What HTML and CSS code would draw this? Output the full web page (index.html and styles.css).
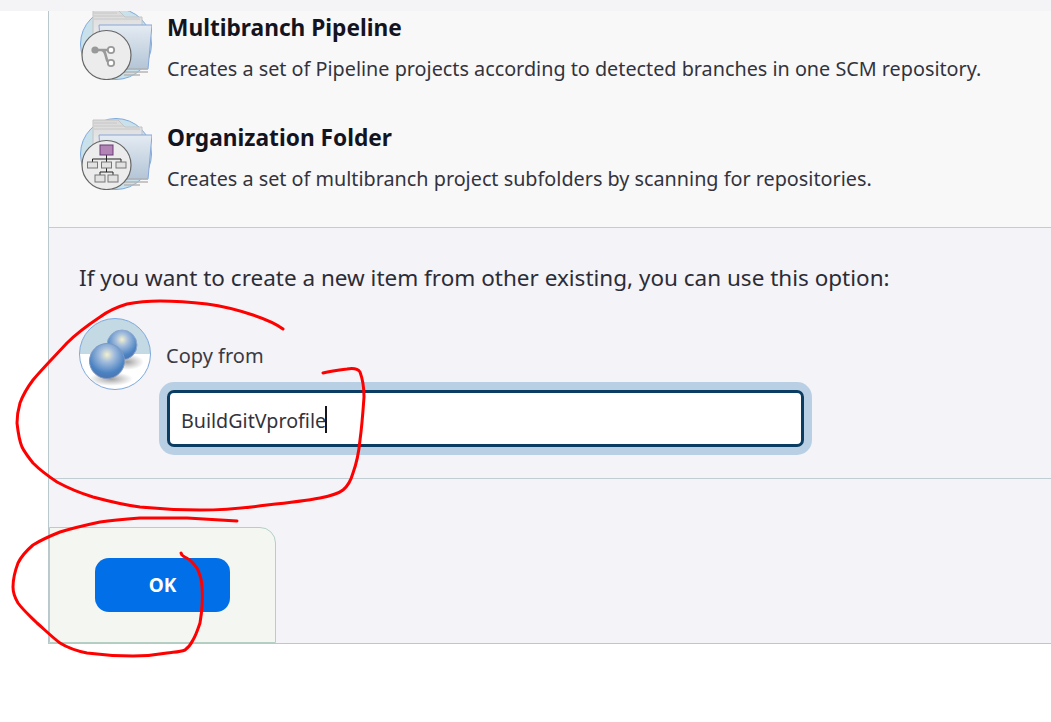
FILE: index.html
```html
<!DOCTYPE html>
<html lang="en">
<head>
<meta charset="utf-8">
<title>New item</title>
<link rel="stylesheet" href="styles.css">
</head>
<body>
<svg class="defs" width="0" height="0" aria-hidden="true">
  <defs>
    <linearGradient id="folderFill" x1="0" y1="0" x2="0" y2="1"><stop offset="0" stop-color="#e4ebf3"/><stop offset="1" stop-color="#b4c5d6"/></linearGradient>
    <linearGradient id="paperFill" x1="0" y1="0" x2="0" y2="1"><stop offset="0" stop-color="#d9d9d9"/><stop offset="1" stop-color="#f2f2f2"/></linearGradient>
    <radialGradient id="ball" cx="0.5" cy="0.32" r="0.7"><stop offset="0" stop-color="#f3f0cf"/><stop offset="0.3" stop-color="#a3bddd"/><stop offset="0.75" stop-color="#4a82c2"/><stop offset="1" stop-color="#4f72aa"/></radialGradient>
    <radialGradient id="shade"><stop offset="0" stop-color="#777" stop-opacity=".7"/><stop offset="1" stop-color="#8a8a8a" stop-opacity="0"/></radialGradient>
    <symbol id="folder" viewBox="0 0 72 72">
      <circle cx="36" cy="36" r="35.5" fill="#c9e1ea" stroke="#7ea9dc"/>
      <path d="M13 2H38L45 9H62V40H13Z" fill="url(#paperFill)" stroke="#c4c4c4"/>
      <path d="M14 5H37M14 8H44M14 11H60" stroke="#c8c8c8"/>
      <path d="M19 17H72L68 61H22Z" fill="url(#folderFill)" stroke="#86a7d8"/>
      <path d="M44 61H68M44 64H68M44 67H60" stroke="#b5b5b5" stroke-width="1.5"/>
      <circle cx="26.5" cy="47" r="24.5" fill="#ececec" stroke="#666" stroke-width="1.2"/>
    </symbol>
  </defs>
</svg>

<div class="topbar"></div>
<main class="panel">
  <section class="types">
    <article class="type">
      <svg class="icon" viewBox="0 0 72 72">
        <use href="#folder"/>
        <path d="M15 42H21C28 42 24 55 31 55M21 42H31" fill="none" stroke="#999" stroke-width="2.600"/>
        <circle cx="15" cy="42" r="3.600" fill="#999"/>
        <circle cx="31" cy="42" r="3.200" fill="#fff" stroke="#999" stroke-width="1.800"/>
        <circle cx="31" cy="55" r="3.200" fill="#fff" stroke="#999" stroke-width="1.800"/>
      </svg>
      <div class="type-text">
        <h2 class="type-title">Multibranch Pipeline</h2>
        <p class="type-desc">Creates a set of Pipeline projects according to detected branches in one SCM repository.</p>
      </div>
    </article>
    <article class="type">
      <svg class="icon" viewBox="0 0 72 72">
        <use href="#folder"/>
        <path d="M26.500 37V41M12.500 44V41H41V44M26.500 41V44M26.500 50V54M20 57V54H33V57" fill="none" stroke="#222"/>
        <rect x="20" y="27" width="13" height="10" fill="#b184b5" stroke="#6a3a78"/>
        <rect x="7.500" y="44" width="10" height="6" fill="#e2e2e2" stroke="#777"/>
        <rect x="21.500" y="44" width="10" height="6" fill="#e2e2e2" stroke="#777"/>
        <rect x="36" y="44" width="10" height="6" fill="#e2e2e2" stroke="#777"/>
        <rect x="15" y="57" width="10" height="7" fill="#e2e2e2" stroke="#777"/>
        <rect x="28" y="57" width="10" height="7" fill="#e2e2e2" stroke="#777"/>
      </svg>
      <div class="type-text">
        <h2 class="type-title">Organization Folder</h2>
        <p class="type-desc">Creates a set of multibranch project subfolders by scanning for repositories.</p>
      </div>
    </article>
  </section>

  <section class="copy">
    <p class="copy-lead">If you want to create a new item from other existing, you can use this option:</p>
    <div class="copy-row">
      <svg class="icon" viewBox="0 0 72 72">
        <defs><clipPath id="disc"><circle cx="36" cy="36" r="35.500"/></clipPath></defs>
        <g clip-path="url(#disc)">
          <rect width="72" height="72" fill="#fff"/>
          <rect width="72" height="36" fill="#c3d9e3"/>
        </g>
        <circle cx="36" cy="36" r="35.500" fill="none" stroke="#7ea9dc"/>
        <ellipse cx="48" cy="44" rx="17" ry="8" fill="url(#shade)"/>
        <ellipse cx="32" cy="61" rx="22" ry="7" fill="url(#shade)"/>
        <circle cx="43" cy="27" r="15" fill="url(#ball)" stroke="#8fa9cf"/>
        <circle cx="28" cy="43" r="17.500" fill="url(#ball)" stroke="#8098c2"/>
      </svg>
      <div class="copy-field">
        <label class="copy-label" for="copyFrom">Copy from</label>
        <div class="input-box" id="copyFrom"><span>BuildGitVprofile</span><i class="caret"></i></div>
      </div>
    </div>
  </section>

  <footer class="actions">
    <div class="button-bar">
      <button class="ok" type="button">OK</button>
    </div>
  </footer>
</main>

<svg class="ink" viewBox="0 0 1051 722" aria-hidden="true">
  <path d="M283 329C275 323 265 319 253 315C238 310 222 306 207 304C190 302 175 301 160 301C148 301 137 302 127 304C117 307 108 311 100 317C88 325 77 333 67 343C55 356 43 368 33 380C27 388 23 395 20 403C18 410 17 416 17 423C18 432 19 440 22 447C25 453 29 458 33 463C40 470 48 476 57 482C68 488 80 493 93 497C108 501 124 505 140 507C160 509 180 510 200 510C222 510 245 508 267 505C286 503 304 501 320 498C330 496 338 494 343 490C348 486 351 480 353 473C357 462 359 451 360 440C362 426 363 411 364 397C364 388 363 380 360 372C358 369 353 368 347 369C339 370 331 371 323 373" />
  <path d="M237 521C220 520 204 519 187 518C171 518 155 518 140 518C126 519 113 520 100 522C86 525 73 528 60 532C50 536 41 540 33 545C26 551 21 557 18 563C15 571 13 579 13 587C13 593 15 598 18 603C23 610 30 616 37 623C45 630 52 637 60 643C68 648 77 651 87 653C102 655 118 656 133 656C145 656 156 655 167 653C174 652 180 652 185 650C189 647 191 644 193 640C196 635 198 629 200 623C202 611 203 599 202 587C202 580 200 575 198 570C196 566 193 563 190 560C187 558 184 557 182 555L181 553" />
</svg>
</body>
</html>
```
FILE: styles.css
```css
* { box-sizing: border-box; }

html, body {
  margin: 0;
  height: 722px;
  overflow: hidden;
  background: #fff;
  color: #14141f;
  font-family: "Noto Sans", "Open Sans", sans-serif;
}

.defs { display: block; height: 0; }

.topbar {
  height: 11px;
  background: #f4f4f7;
}

.panel {
  margin-left: 48px;
  height: 633px;
  border-left: 1px solid #b9c8cd;
  border-bottom: 1px solid #b9c8cd;
  background: #f3f3f8;
  display: flex;
  flex-direction: column;
}

.types {
  height: 217px;
  overflow: hidden;
  background: #f8f8f9;
  border-bottom: 1px solid #c0cdd2;
  padding-left: 31px;
}

.type {
  height: 110px;
  display: flex;
  gap: 15px;
  margin-top: -3px;
  margin-bottom: 3px;
}

.icon {
  width: 72px;
  height: 72px;
  flex: none;
  display: block;
}

.type-text { padding-top: 6px; }

.type-title {
  margin: 0;
  font-size: 22.700px;
  line-height: 28px;
  font-weight: 700;
}

.type-desc {
  margin: 13px 0 0;
  font-size: 19.800px;
  line-height: 28px;
  color: #33333c;
}

.copy {
  height: 251px;
  border-bottom: 1px solid #c0cdd2;
  padding: 35px 0 0 30px;
}

.copy-lead {
  margin: 0;
  font-size: 22.500px;
  line-height: 30px;
  color: #2c2c36;
}

.copy-row {
  display: flex;
  gap: 15px;
  margin-top: 25px;
}

.copy-field { padding-top: 24px; }

.copy-label {
  display: block;
  font-size: 20px;
  line-height: 28px;
  color: #3a3a44;
}

.input-box {
  width: 637px;
  height: 57px;
  margin: 20px 0 0 1px;
  padding: 4px 0 0 11px;
  display: flex;
  align-items: center;
  background: #fff;
  border: 3px solid #0b3d62;
  border-radius: 7px;
  box-shadow: 0 0 0 8px #b9d0e4;
  font-size: 19.700px;
  color: #33333c;
}

.caret {
  width: 2px;
  height: 27px;
  margin: -2px 0 0 -1px;
  background: #14141f;
}

.actions { flex: 1; padding-top: 48px; }

.button-bar {
  width: 227px;
  height: 116px;
  padding: 30px 0 0 45px;
  background: #f4f6f2;
  border: 1px solid #b5cfc4;
  border-top-right-radius: 16px;
}

.ok {
  width: 135px;
  height: 54px;
  border: 0;
  border-radius: 14px;
  background: #0170e8;
  color: #fff;
  font: 700 19px "Noto Sans", "Open Sans", sans-serif;
}

.ink {
  position: absolute;
  left: 0;
  top: 0;
  width: 1051px;
  height: 722px;
  fill: none;
  stroke: #f00;
  stroke-width: 3;
  stroke-linecap: round;
  stroke-linejoin: round;
  pointer-events: none;
}
```
